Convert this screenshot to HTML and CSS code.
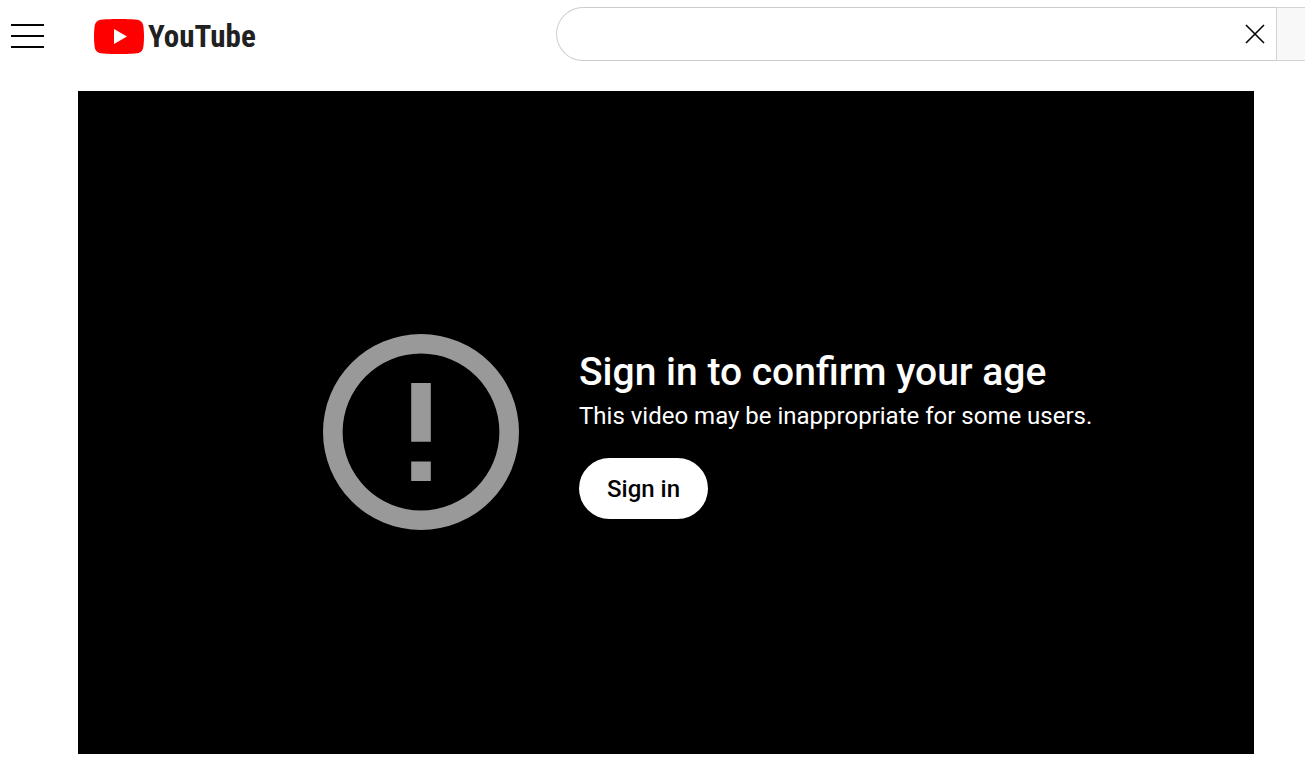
FILE: index.html
```html
<!DOCTYPE html>
<html lang="en">
<head>
  <meta charset="UTF-8">
  <title>YouTube</title>
  <link rel="stylesheet" href="styles.css">
</head>
<body>

<header class="masthead">
  <div class="start">
    <button class="guide" aria-label="Guide">
      <svg width="34" height="26" viewBox="0 0 34 26">
        <path d="M0 2h33M0 13h33M0 24h33" stroke="#030303" stroke-width="2"/>
      </svg>
    </button>
    <a class="logo" href="#">
      <svg width="50" height="35" viewBox="0 0 50 35">
        <path d="M49 5.5C48.400 3.300 46.700 1.600 44.500 1C40.600 0 25 0 25 0S9.400 0 5.500 1C3.300 1.600 1.600 3.300 1 5.500C0 9.400 0 17.500 0 17.500S0 25.600 1 29.500C1.600 31.700 3.300 33.400 5.500 34C9.400 35 25 35 25 35S40.600 35 44.500 34C46.700 33.400 48.400 31.700 49 29.500C50 25.600 50 17.500 50 17.500S50 9.400 49 5.500Z" fill="#f00"/>
        <path d="M20 10v15l13-7.500z" fill="#fff"/>
      </svg>
      <span>YouTube</span>
    </a>
  </div>
  <form class="search">
    <div class="search-box">
      <input type="text" aria-label="Search">
      <button class="clear" type="reset" aria-label="Clear">
        <svg width="20" height="20" viewBox="0 0 20 20">
          <path d="M1 1l18 18M19 1L1 19" stroke="#030303" stroke-width="1.6"/>
        </svg>
      </button>
    </div>
    <button class="search-button" type="submit" aria-label="Search"></button>
  </form>
</header>

<main class="player">
  <svg class="alert" width="196" height="196" viewBox="0 0 20 20" fill="#999">
    <path d="M10 0a10 10 0 1 0 0 20a10 10 0 0 0 0-20zm0 18a8 8 0 1 1 0-16a8 8 0 0 1 0 16zM9 5h2v6H9zM9 13h2v2H9z"/>
  </svg>
  <div class="message">
    <h1>Sign in to confirm your age</h1>
    <p>This video may be inappropriate for some users.</p>
    <button class="sign-in">Sign in</button>
  </div>
</main>

</body>
</html>
```

FILE: styles.css
```css
* {
  box-sizing: border-box;
}
body {
  margin: 0;
  background: #fff;
  font-family: Roboto, "Liberation Sans", sans-serif;
  color: #030303;
}
button {
  border: none;
  background: none;
  padding: 0;
  font-family: inherit;
  cursor: pointer;
}
svg {
  display: block;
}
.masthead {
  display: flex;
  padding-top: 7px;
}
.start {
  display: flex;
  align-items: center;
  flex: 0 0 556px;
  padding: 4px 0 0 11px;
}
.logo {
  display: flex;
  align-items: center;
  gap: 4px;
  margin-left: 49px;
  color: #212121;
  text-decoration: none;
}
.logo span {
  font-family: "Roboto Condensed", "Liberation Sans Narrow", "Liberation Sans", sans-serif;
  font-size: 31px;
  font-weight: bold;
  line-height: 35px;
}
.search {
  display: flex;
  flex: 1;
  height: 54px;
}
.search-box {
  display: flex;
  align-items: center;
  flex: 1;
  padding: 0 11px 0 24px;
  border: 1px solid #ccc;
  border-right: none;
  border-radius: 27px 0 0 27px;
}
.search-box input {
  flex: 1;
  border: none;
  outline: none;
  background: none;
  font-family: inherit;
  font-size: 24px;
}
.search-button {
  width: 29px;
  border: 1px solid #d3d3d3;
  border-right: none;
  background: #f8f8f8;
}
.player {
  display: flex;
  align-items: center;
  gap: 60px;
  margin: 30px 51px 22px 78px;
  padding: 18px 0 0 245px;
  aspect-ratio: 1176 / 663;
  background: #000;
  color: #fff;
}
.alert {
  flex: none;
}
.message {
  padding-top: 4px;
}
h1 {
  margin: 0;
  font-size: 39px;
  font-weight: 500;
  line-height: 48px;
}
p {
  margin: 4px 0 26px;
  font-size: 24px;
  line-height: 32px;
}
.sign-in {
  height: 61px;
  padding: 0 28px;
  border-radius: 31px;
  background: #fff;
  color: #030303;
  font-size: 24px;
  font-weight: 500;
}
```
